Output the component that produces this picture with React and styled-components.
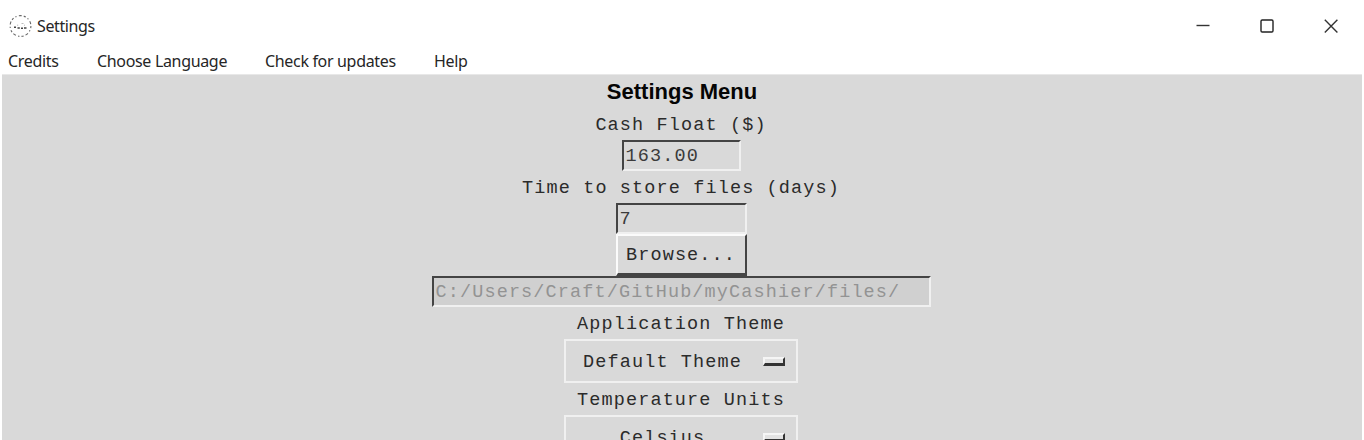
import React from "react";
import styled, { createGlobalStyle } from "styled-components";

const GlobalStyle = createGlobalStyle`
  * { box-sizing: border-box; }
  body { margin: 0; background: #fff; overflow: hidden; }
`;

const Window = styled.div`
  width: 1364px;
  height: 440px;
  overflow: hidden;
  display: flex;
  flex-direction: column;
  background: #fff;
  font-family: "Noto Sans", "Open Sans", sans-serif;
  color: #262626;
`;

const TitleBar = styled.header`
  flex: none;
  height: 49px;
  padding: 3px 25px 0 9px;
  display: flex;
  align-items: center;
`;

const AppName = styled.span`
  margin-left: 5px;
  font-size: 16px;
  line-height: 20px;
  letter-spacing: -0.4px;
  flex: 1;
`;

const Controls = styled.div`
  display: flex;
  gap: 48px;
`;

const MenuBar = styled.nav`
  flex: none;
  height: 25px;
  padding: 0 0 2px 8px;
  display: flex;
  align-items: center;
`;

const MenuItem = styled.span`
  width: ${(p) => p.$width}px;
  font-size: 16px;
  line-height: 20px;
  letter-spacing: -0.33px;
  white-space: nowrap;
`;

const Content = styled.main`
  flex: 1;
  min-height: 0;
  margin: 0 2px;
  padding-right: 2px;
  border-top: 1px solid #e8e8e8;
  background: #d9d9d9;
  display: flex;
  flex-direction: column;
  align-items: center;
  overflow: hidden;
  font-family: "Liberation Mono", monospace;
  font-size: 18.5px;
  letter-spacing: 1.13px;
  color: #2b2b2b;
`;

const Heading = styled.h1`
  flex: none;
  margin: 0;
  height: 33px;
  padding-left: 2px;
  font: bold 22px/34px "Liberation Sans", sans-serif;
  letter-spacing: 0;
  color: #050505;
`;

const Label = styled.div`
  flex: none;
  height: 32px;
  line-height: 36px;
  white-space: pre;
`;

const Entry = styled.div`
  flex: none;
  width: ${(p) => p.$width}px;
  height: 31px;
  padding-left: 2px;
  line-height: 30px;
  white-space: nowrap;
  border: 2px solid;
  border-color: #444 #f0f0f0 #f0f0f0 #444;
  background: ${(p) => (p.$disabled ? "#d0d0d0" : "#d9d9d9")};
  color: ${(p) => (p.$disabled ? "#939393" : "#3b3b3b")};
`;

const Button = styled.div`
  flex: none;
  width: 131px;
  height: 42px;
  border: 2px solid;
  border-color: #fbfbfb #444 #444 #fbfbfb;
  border-bottom-width: 3px;
  line-height: 40px;
  text-align: center;
`;

const Option = styled.div`
  flex: none;
  width: 234px;
  height: 44px;
  border: 2px solid #f0f0f0;
  padding: 0 11px 0 14px;
  display: flex;
  align-items: center;
`;

const OptionText = styled.span`
  flex: 1;
  padding: 2px 18px 0 0;
  text-align: center;
  white-space: nowrap;
`;

const Indicator = styled.span`
  width: 22px;
  height: 9px;
  border: 2px solid;
  border-color: #f5f5f5 #333 #333 #f5f5f5;
  border-bottom-width: 3px;
  background: #e2e2e2;
`;

const AppLogo = () => (
  <svg width="23" height="23" viewBox="0 0 23 23" fill="none">
    <circle cx="11.5" cy="11" r="10.4" stroke="#666" strokeWidth="1.1" strokeDasharray="2.2 2.2 1.2 2.4 3 2" />
    <path d="M5 12.2h2M8.5 13h2.3M12 13.3h2M15 13h2.5" stroke="#444" strokeWidth="1.4" />
    <path d="M12.5 8.5h2M8 10.2h1.2M15 10.2h1" stroke="#bbb" strokeWidth="1" />
  </svg>
);

const Minimize = () => (
  <svg width="16" height="16" viewBox="0 0 16 16">
    <path d="M1.5 7.5h13" stroke="#333" strokeWidth="1.4" />
  </svg>
);

const Maximize = () => (
  <svg width="16" height="16" viewBox="0 0 16 16">
    <rect x="2" y="2" width="12" height="12" rx="1.2" fill="none" stroke="#222" strokeWidth="1.4" />
  </svg>
);

const Close = () => (
  <svg width="16" height="16" viewBox="0 0 16 16">
    <path d="M1.8 1.8l12.6 12.6M14.4 1.8L1.8 14.4" stroke="#333" strokeWidth="1.4" />
  </svg>
);

export default function App() {
  return (
    <Window>
      <GlobalStyle />
      <TitleBar>
        <AppLogo />
        <AppName>Settings</AppName>
        <Controls>
          <Minimize />
          <Maximize />
          <Close />
        </Controls>
      </TitleBar>
      <MenuBar>
        <MenuItem $width={89}>Credits</MenuItem>
        <MenuItem $width={168}>Choose Language</MenuItem>
        <MenuItem $width={169}>Check for updates</MenuItem>
        <MenuItem $width={60}>Help</MenuItem>
      </MenuBar>
      <Content>
        <Heading>Settings Menu</Heading>
        <Label>Cash Float ($)</Label>
        <Entry $width={119}>163.00</Entry>
        <Label>Time to store files (days)</Label>
        <Entry $width={131}>7</Entry>
        <Button>Browse...</Button>
        <Entry $width={499} $disabled>C:/Users/Craft/GitHub/myCashier/files/</Entry>
        <Label>Application Theme</Label>
        <Option>
          <OptionText>Default Theme</OptionText>
          <Indicator />
        </Option>
        <Label>Temperature Units</Label>
        <Option>
          <OptionText>Celsius</OptionText>
          <Indicator />
        </Option>
      </Content>
    </Window>
  );
}
